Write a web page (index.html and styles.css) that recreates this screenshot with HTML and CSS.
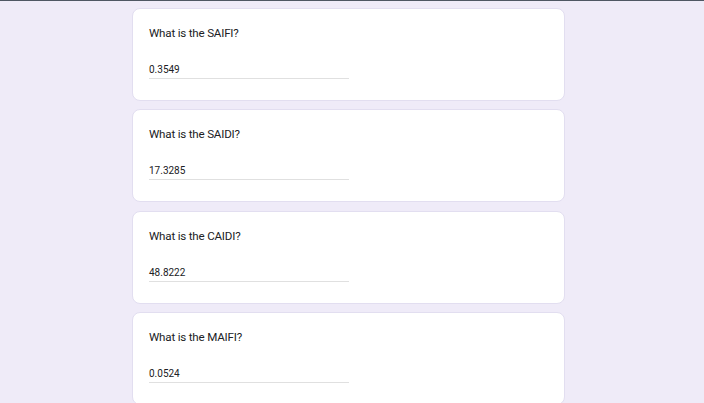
FILE: index.html
```html
<!DOCTYPE html>
<html>
<head>
<meta charset="utf-8">
<link rel="stylesheet" href="styles.css">
</head>
<body>
<div class="page">
  <div class="card">
    <div class="question">What is the SAIFI?</div>
    <div class="answer">0.3549</div>
  </div>
  <div class="card">
    <div class="question">What is the SAIDI?</div>
    <div class="answer">17.3285</div>
  </div>
  <div class="card">
    <div class="question">What is the CAIDI?</div>
    <div class="answer">48.8222</div>
  </div>
  <div class="card">
    <div class="question">What is the MAIFI?</div>
    <div class="answer">0.0524</div>
  </div>
</div>
</body>
</html>
```
FILE: styles.css
```css
html, body {
  margin: 0;
  padding: 0;
  background: #efebf8;
  height: 100%;
  overflow: hidden;
}
body {
  border-top: 1px solid #4f5763;
  font-family: Roboto, "Noto Sans", sans-serif;
  color: #202124;
}
.page {
  padding: 7px 0 0 132px;
  width: 433px;
}
.card {
  box-sizing: border-box;
  height: 93px;
  margin-bottom: 8.3px;
  background: #fff;
  border: 1px solid #e2def0;
  border-radius: 8px;
  padding: 16px 16px 0 16px;
}
.question {
  font-size: 11.6px;
  letter-spacing: -0.2px;
  line-height: 16px;
}
.answer {
  margin-top: 22px;
  width: 200px;
  font-size: 10px;
  line-height: 14px;
  padding-bottom: 1px;
  border-bottom: 1px solid #e0e0e0;
}
```
